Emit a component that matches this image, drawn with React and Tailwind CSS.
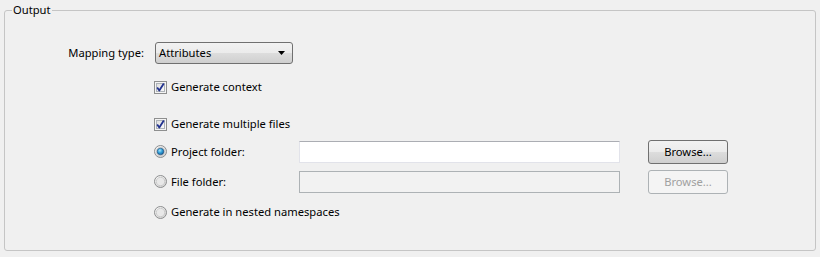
import React from 'react';

function CheckBox({ checked }) {
  return (
    <svg width="13" height="13" viewBox="0 0 13 13" className="shrink-0">
      <defs>
        <linearGradient id="cbg" x1="0" y1="0" x2="1" y2="1">
          <stop offset="0" stopColor="#dcdcdc" />
          <stop offset="1" stopColor="#fbfbfb" />
        </linearGradient>
      </defs>
      <rect x="0.5" y="0.5" width="12" height="12" fill="#f4f4f4" stroke="#8e8f8f" />
      <rect x="2.5" y="2.5" width="8" height="8" fill="url(#cbg)" stroke="#aeb3b9" />
      {checked && (
        <path d="M3.2 6.6 L5.3 9.6 L9.8 2.6" fill="none" stroke="#21328f" strokeWidth="1.8" strokeLinejoin="round" />
      )}
    </svg>
  );
}

function Radio({ checked }) {
  return (
    <svg width="13" height="13" viewBox="0 0 13 13" className="shrink-0">
      <defs>
        <radialGradient id="rbg" cx="0.35" cy="0.3" r="0.8">
          <stop offset="0" stopColor="#ffffff" />
          <stop offset="1" stopColor="#cfcfcf" />
        </radialGradient>
        <radialGradient id="rdot" cx="0.4" cy="0.35" r="0.7">
          <stop offset="0" stopColor="#a9e3fb" />
          <stop offset="0.5" stopColor="#2f9fd8" />
          <stop offset="1" stopColor="#16568f" />
        </radialGradient>
      </defs>
      <circle cx="6.5" cy="6.5" r="6" fill="url(#rbg)" stroke="#8d8e8f" />
      <circle cx="6.5" cy="6.5" r="4.2" fill="#e8e8e8" stroke="#c4c4c4" strokeWidth="0.8" />
      {checked && <circle cx="6.5" cy="6.5" r="3.3" fill="url(#rdot)" stroke="#1e4e7a" strokeWidth="0.6" />}
    </svg>
  );
}

function Button({ children, disabled }) {
  return disabled ? (
    <div className="w-[80px] h-[24px] flex items-center justify-center rounded-[3px] border border-[#adb2b5] bg-[#f4f4f4] text-[#a0a0a0]">
      {children}
    </div>
  ) : (
    <div className="w-[80px] h-[24px] flex items-center justify-center rounded-[3px] border border-[#707070] bg-[linear-gradient(#f2f2f2_0%,#ebebeb_50%,#dddddd_50%,#cfcfcf_100%)] text-black">
      {children}
    </div>
  );
}

export default function App() {
  return (
    <div
      className="w-[820px] h-[257px] bg-[#f0f0f0] text-[11.2px] text-black overflow-hidden pt-[2px]"
      style={{ fontFamily: '"Segoe UI", "Noto Sans", sans-serif' }}
    >
      <fieldset className="ml-[4px] w-[812px] h-[249px] border border-[#c5c5c5] rounded-[3px]">
        <legend className="ml-[7px] px-[1px] leading-[16px]">Output</legend>

        {/* Mapping type */}
        <div className="mt-[24px] flex items-center h-[22px]">
          <div className="w-[139px] text-right">Mapping type:</div>
          <div className="ml-[11px] w-[138px] h-[22px] flex items-center justify-between pl-[3px] pr-[7px] rounded-[3px] border border-[#707070] bg-[linear-gradient(#f2f2f2_0%,#ebebeb_50%,#dddddd_50%,#cfcfcf_100%)]">
            <span>Attributes</span>
            <svg width="7" height="4" viewBox="0 0 7 4">
              <path d="M0 0 H7 L3.5 4 Z" fill="#000" />
            </svg>
          </div>
        </div>

        <div className="ml-[149px] flex flex-col">
          <label className="mt-[15px] h-[16px] flex items-center gap-[4px]">
            <CheckBox checked />
            <span>Generate context</span>
          </label>

          <label className="mt-[21px] h-[16px] flex items-center gap-[4px]">
            <CheckBox checked />
            <span>Generate multiple files</span>
          </label>

          <div className="mt-[8px] h-[24px] flex items-center">
            <div className="w-[145px] flex items-center gap-[4px]">
              <Radio checked />
              <span>Project folder:</span>
            </div>
            <div className="w-[321px] h-[22px] bg-white border border-[#e2e3ea] border-t-[#abadb3]" />
            <div className="ml-[28px]">
              <Button>Browse...</Button>
            </div>
          </div>

          <div className="mt-[6px] h-[24px] flex items-center">
            <div className="w-[145px] flex items-center gap-[4px]">
              <Radio />
              <span>File folder:</span>
            </div>
            <div className="w-[321px] h-[22px] bg-[#f2f2f2] border border-[#adb2b5]" />
            <div className="ml-[28px]">
              <Button disabled>Browse...</Button>
            </div>
          </div>

          <div className="mt-[10px] h-[16px] flex items-center gap-[4px]">
            <Radio />
            <span>Generate in nested namespaces</span>
          </div>
        </div>
      </fieldset>
    </div>
  );
}
